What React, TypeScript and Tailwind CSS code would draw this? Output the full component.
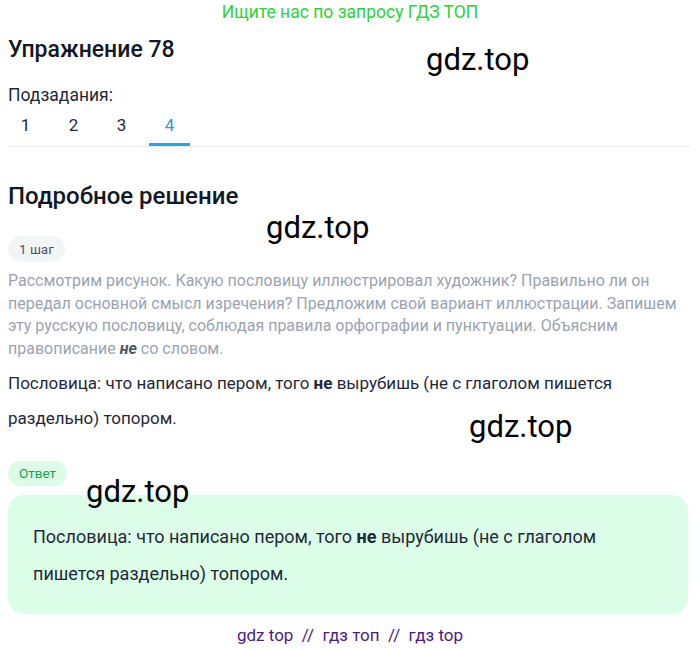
import React from "react";

const roboto = { fontFamily: "Roboto, 'Liberation Sans', sans-serif" };

function Watermark({ className }: { className: string }) {
  return (
    <div
      className={`absolute text-[31px] leading-none text-black pointer-events-none ${className}`}
      style={{ fontFamily: "Roboto, Arial, sans-serif" }}
    >
      gdz.top
    </div>
  );
}

export default function App() {
  return (
    <div className="relative w-[700px] h-[650px] bg-white overflow-hidden" style={roboto}>
      <div className="text-center text-[17.5px] leading-[24px] text-[#2fd13d]">
        Ищите нас по запросу ГДЗ ТОП
      </div>
      <div className="px-2">
        <h1 className="mt-[12px] text-[23px] leading-[28px] font-medium text-[#111827]">Упражнение 78</h1>
        <div className="mt-[21px] text-[17.5px] leading-[20px] text-[#1f2937]">Подзадания:</div>
        <div className="mt-[2px] flex border-b border-[#e5e7eb] w-[682px]">
          {["1", "2", "3", "4"].map((n, i) => (
            <div
              key={n}
              className={`w-[41px] h-[39px] pt-[2px] flex items-center justify-center text-[17px] border-b-[3px] ${
                i === 0 ? "-ml-[3px]" : "ml-[7px]"
              } ${n === "4" ? "text-[#3b97c8] border-[#22a7e0]" : "text-[#1f2937] border-transparent"}`}
            >
              {n}
            </div>
          ))}
        </div>
        <h2 className="mt-[35px] text-[24px] leading-[28px] font-medium text-[#111827]">Подробное решение</h2>
        <div className="mt-[26px] inline-flex items-center h-[26px] px-[11px] rounded-full bg-[#f3f4f6] text-[13.5px] text-[#4b5563]">
          1 шаг
        </div>
        <p className="mt-[8px] text-[16px] leading-[22.5px] text-[#9ca3af]">
          Рассмотрим рисунок. Какую пословицу иллюстрировал художник? Правильно ли он передал основной смысл
          изречения? Предложим свой вариант иллюстрации. Запишем эту русскую пословицу, соблюдая правила
          орфографии и пунктуации. Объясним правописание <b className="italic text-[#4b5563]">не</b> со словом.
        </p>
        <p className="mt-[6px] text-[17px] leading-[35px] text-[#1f2937]">
          Пословица: что написано пером, того <b>не</b> вырубишь (не с глаголом пишется раздельно) топором.
        </p>
        <div className="mt-[25px] inline-flex items-center h-[25px] px-[11px] rounded-full bg-[#dcfce7] text-[13.5px] text-[#16a34a]">
          Ответ
        </div>
        <div className="mt-[9px] w-[680px] h-[119px] rounded-[16px] bg-[#dcfde8] pl-[25px] pr-[60px] pt-[23px]">
          <p className="text-[18px] leading-[37px] text-[#1f2937]">
            Пословица: что написано пером, того <b>не</b> вырубишь (не с глаголом пишется раздельно) топором.
          </p>
        </div>
        <div className="mt-[9px] text-center text-[17px] leading-[24px] text-[#4c1d80]">
          gdz top&nbsp; //&nbsp; гдз топ&nbsp; //&nbsp; гдз top
        </div>
      </div>
      <Watermark className="left-[426px] top-[44px]" />
      <Watermark className="left-[266px] top-[212px]" />
      <Watermark className="left-[469px] top-[411px]" />
      <Watermark className="left-[86px] top-[476px]" />
    </div>
  );
}
